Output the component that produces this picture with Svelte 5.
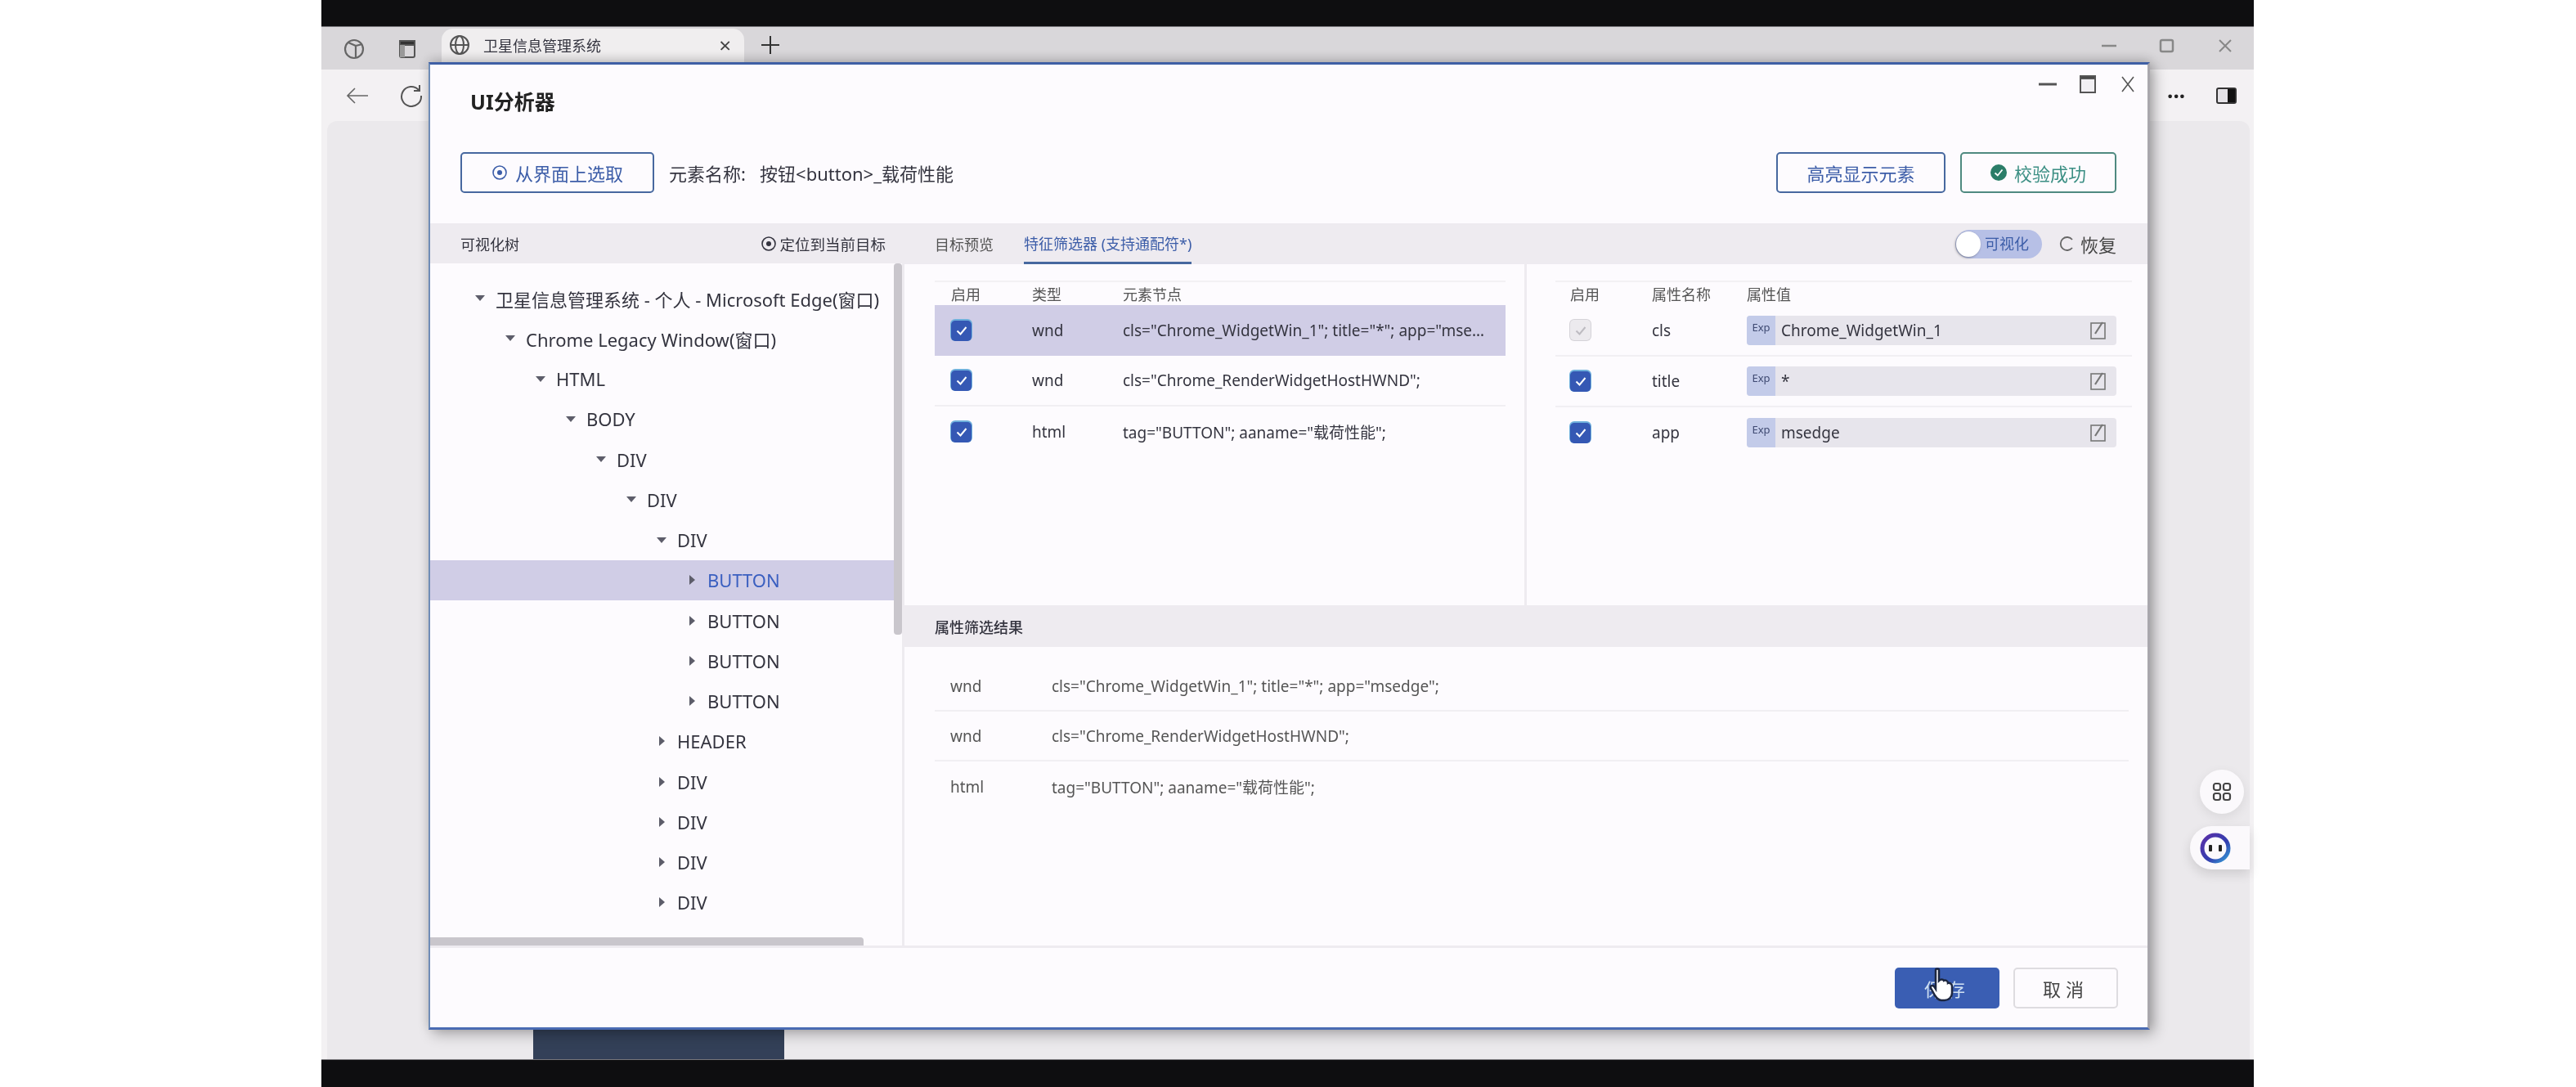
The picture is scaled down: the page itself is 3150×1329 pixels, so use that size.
<script>
  const tree = [
    { level: 0, label: "卫星信息管理系统 - 个人 - Microsoft Edge(窗口)", open: true },
    { level: 1, label: "Chrome Legacy Window(窗口)", open: true },
    { level: 2, label: "HTML", open: true },
    { level: 3, label: "BODY", open: true },
    { level: 4, label: "DIV", open: true },
    { level: 5, label: "DIV", open: true },
    { level: 6, label: "DIV", open: true },
    { level: 7, label: "BUTTON", selected: true },
    { level: 7, label: "BUTTON" },
    { level: 7, label: "BUTTON" },
    { level: 7, label: "BUTTON" },
    { level: 6, label: "HEADER" },
    { level: 6, label: "DIV" },
    { level: 6, label: "DIV" },
    { level: 6, label: "DIV" },
    { level: 6, label: "DIV" },
    { level: 6, label: "DIV" }
  ];

  const nodes = [
    { type: "wnd", text: 'cls="Chrome_WidgetWin_1"; title="*"; app="msedge";', selected: true },
    { type: "wnd", text: 'cls="Chrome_RenderWidgetHostHWND";' },
    { type: "html", text: 'tag="BUTTON"; aaname="载荷性能";' }
  ];

  const attrs = [
    { name: "cls", value: "Chrome_WidgetWin_1", disabled: true },
    { name: "title", value: "*" },
    { name: "app", value: "msedge" }
  ];
</script>

{#snippet target(size)}
  <svg width={size} height={size} viewBox="0 0 20 20" fill="none" stroke="currentColor" stroke-width="1.6">
    <circle cx="10" cy="10" r="8" />
    <circle cx="10" cy="10" r="3" fill="currentColor" stroke="none" />
  </svg>
{/snippet}

{#snippet checkbox(disabled)}
  <span class="check" class:disabled>
    <svg width="18" height="18" viewBox="0 0 18 18" fill="none" stroke="currentColor" stroke-width="2">
      <path d="M3.5 9.5 7.5 13.5 14.5 5" />
    </svg>
  </span>
{/snippet}

<div class="page">
  <div class="screen">
    <div class="letterbox"></div>

    <div class="tabstrip">
      <span class="tool">
        <svg width="26" height="28" viewBox="0 0 26 28" fill="none" stroke="#666" stroke-width="2.200">
          <circle cx="13" cy="14" r="11" />
          <path d="M6 6 15 10V24M15 10 23 8" />
        </svg>
      </span>
      <span class="tool gap">
        <svg width="22" height="24" viewBox="0 0 22 24" fill="none" stroke="#555" stroke-width="2">
          <rect x="2" y="2" width="18" height="20" rx="2" />
          <rect x="2" y="2" width="18" height="5" fill="#333" />
          <rect x="2" y="7" width="6" height="15" fill="#999" stroke="none" />
        </svg>
      </span>
      <div class="tab">
        <svg width="26" height="26" viewBox="0 0 26 26" fill="none" stroke="#555" stroke-width="2">
          <circle cx="13" cy="13" r="11" />
          <ellipse cx="13" cy="13" rx="5" ry="11" />
          <path d="M2 13H24" />
        </svg>
        <span class="tab-title">卫星信息管理系统</span>
        <span class="tab-close">×</span>
      </div>
      <span class="tool plus">
        <svg width="24" height="24" viewBox="0 0 24 24" stroke="#333" stroke-width="2">
          <path d="M12 1V23M1 12H23" />
        </svg>
      </span>
      <div class="win-controls">
        <svg class="tool" width="20" height="20" viewBox="0 0 20 20" stroke="#888" stroke-width="2.500"><path d="M1 10H19" /></svg>
        <svg class="tool" width="20" height="20" viewBox="0 0 20 20" fill="none" stroke="#888" stroke-width="2.500"><rect x="2" y="3" width="15" height="14" rx="2" /></svg>
        <svg class="tool" width="20" height="20" viewBox="0 0 20 20" stroke="#888" stroke-width="2"><path d="M3 3 17 17M17 3 3 17" /></svg>
      </div>
    </div>

    <div class="toolbar">
      <svg class="tool" width="28" height="28" viewBox="0 0 28 28" fill="none" stroke="#666" stroke-width="1.600">
        <path d="M27 14H2M11 5 2 14 11 23" />
      </svg>
      <svg class="tool reload" width="28" height="28" viewBox="0 0 28 28" fill="none" stroke="#555" stroke-width="2">
        <path d="M23 7A12 12 0 1 0 26 14" />
        <path d="M24 1V8H17" />
      </svg>
      <span class="dots">···</span>
      <span class="sidebar-icon"><i></i></span>
    </div>

    <div class="browser-page">
      <div class="card"></div>
      <div class="nav-block"></div>

      <button class="float-btn" aria-label="应用">
        <svg width="24" height="24" viewBox="0 0 24 24" fill="none" stroke="#444" stroke-width="2.2">
          <rect x="2" y="2" width="8" height="8" rx="2.5" />
          <rect x="14" y="2" width="8" height="8" rx="2.5" />
          <rect x="2" y="14" width="8" height="8" rx="2.5" />
          <rect x="14" y="14" width="8" height="8" rx="2.5" />
        </svg>
      </button>
      <button class="bot-btn" aria-label="助手">
        <svg width="38" height="38" viewBox="0 0 38 38" fill="none">
          <defs>
            <linearGradient id="ring" x1="0" y1="0" x2="1" y2="1">
              <stop offset="0" stop-color="#5b2fa8" />
              <stop offset="0.6" stop-color="#3340b0" />
              <stop offset="1" stop-color="#35a0d8" />
            </linearGradient>
          </defs>
          <circle cx="19" cy="19" r="16" stroke="url(#ring)" stroke-width="5" />
          <rect x="11" y="15" width="4" height="8" rx="1" fill="#222" />
          <rect x="23" y="15" width="4" height="8" rx="1" fill="#222" />
        </svg>
      </button>
    </div>

    <div class="letterbox bottom"></div>

    <div class="dialog">
      <header class="dialog-head">
        <h1>UI分析器</h1>
        <div class="dialog-controls">
          <span><svg width="22" height="4" viewBox="0 0 22 4"><rect width="22" height="3" y="0.5" fill="#555" /></svg></span>
          <span>
            <svg width="20" height="22" viewBox="0 0 20 22" fill="#f1eff3" stroke="#555" stroke-width="2">
              <rect x="1" y="1" width="18" height="20" />
              <rect x="1" y="1" width="18" height="3" fill="#444" />
            </svg>
          </span>
          <span><svg width="16" height="20" viewBox="0 0 16 20" stroke="#555" stroke-width="1.6"><path d="M1 1 15 19M15 1 1 19" /></svg></span>
        </div>
      </header>

      <div class="actions">
        <button class="btn primary-line pick">{@render target(20)}从界面上选取</button>
        <span class="element-name">元素名称:&nbsp;&nbsp; 按钮&lt;button&gt;_载荷性能</span>
        <span class="spacer"></span>
        <button class="btn primary-line highlight">高亮显示元素</button>
        <button class="btn success-line">
          <svg width="20" height="20" viewBox="0 0 20 20">
            <circle cx="10" cy="10" r="10" fill="#2b7d68" />
            <path d="M5.5 10.5 8.800 13.500 14.500 6.500" fill="none" stroke="#fff" stroke-width="1.800" />
          </svg>
          校验成功
        </button>
      </div>

      <div class="body">
        <aside class="tree-panel">
          <div class="tree-head">
            <span>可视化树</span>
            <span class="locate">{@render target(20)}定位到当前目标</span>
          </div>
          <div class="tree">
            {#each tree as row}
              <div class="tree-row" class:selected={row.selected} style={`padding-left:${54 + row.level * 37}px`}>
                <i class={row.open ? "arrow down" : "arrow right"}></i>
                <span>{row.label}</span>
              </div>
            {/each}
            <div class="scroll-v"></div>
            <div class="scroll-h"></div>
          </div>
        </aside>

        <main class="detail">
          <div class="tabs">
            <span class="tab-item">目标预览</span>
            <span class="tab-item active">特征筛选器 (支持通配符*)</span>
            <span class="spacer"></span>
            <span class="toggle"><i></i>可视化</span>
            <span class="restore">
              <svg width="20" height="20" viewBox="0 0 20 20" fill="none" stroke="#666" stroke-width="1.800">
                <path d="M16 5A8 8 0 1 0 16 15" />
              </svg>
              恢复
            </span>
          </div>

          <div class="filters">
            <section class="node-table">
              <div class="row heading node-grid">
                <span>启用</span><span>类型</span><span>元素节点</span>
              </div>
              {#each nodes as node}
                <div class="row node-grid" class:selected={node.selected}>
                  {@render checkbox(false)}
                  <span>{node.type}</span>
                  <span class="ellipsis">{node.text}</span>
                </div>
              {/each}
            </section>

            <section class="attr-table">
              <div class="row heading attr-grid">
                <span>启用</span><span>属性名称</span><span>属性值</span>
              </div>
              {#each attrs as attr}
                <div class="row attr-grid">
                  {@render checkbox(attr.disabled)}
                  <span>{attr.name}</span>
                  <div class="value">
                    <span class="exp">Exp</span>
                    <span class="value-text">{attr.value}</span>
                    <svg width="22" height="24" viewBox="0 0 22 24" fill="none" stroke="#777" stroke-width="1.600">
                      <rect x="2" y="3" width="17" height="19" />
                      <path d="M7 16 16 2" stroke-width="2.200" />
                    </svg>
                  </div>
                </div>
              {/each}
            </section>
          </div>

          <div class="result-head">属性筛选结果</div>
          <div class="results">
            {#each nodes as node}
              <div class="result-row">
                <span>{node.type}</span>
                <span>{node.text}</span>
              </div>
            {/each}
          </div>
        </main>
      </div>

      <footer class="dialog-foot">
        <button class="btn save">保存</button>
        <button class="btn cancel">取消</button>
      </footer>
    </div>

    <svg class="cursor" width="30" height="42" viewBox="0 0 30 42">
      <path
        d="M8 3C8 1 12 1 12 3V16C14 14 17 14 18 16C20 15 23 16 23 19C25 18 28 20 28 23V31C28 36 24 40 19 40H15C11 40 9 37 7 34L2 25C1 22 4 21 6 23L8 26Z"
        fill="#fff"
        stroke="#1d2740"
        stroke-width="2.500"
      />
    </svg>
  </div>
</div>

<style>
  :global(*), :global(*::before), :global(*::after) { box-sizing: border-box; }
  :global(body) {
    margin: 0;
    background: #fff;
    font-family: "Noto Sans", "Noto Sans CJK SC", sans-serif;
    color: #34343f;
  }

  /* the capture is a soft video frame, so everything sits slightly out of focus */
  .page { width: 3150px; height: 1329px; overflow: hidden; background: #fff; filter: blur(0.5px); }
  .screen {
    position: relative;
    display: flex;
    flex-direction: column;
    width: 2363px;
    height: 1329px;
    margin-left: 393px;
  }
  .letterbox { flex: 0 0 33px; background: #0e0e10; border-bottom: 1px solid #77767a; }
  .letterbox.bottom { flex-basis: 34px; border-bottom: 0; border-top: 1px solid #77767a; }
  .spacer { flex: 1; }

  /* Browser chrome behind the dialog */
  .tabstrip {
    flex: 0 0 52px;
    display: flex;
    align-items: center;
    padding: 2px 19px 0 24px;
    background: #d9d7da;
  }
  .tool { flex: 0 0 32px; display: flex; justify-content: center; }
  .gap { margin-left: 33px; }
  .tab {
    display: flex;
    align-items: center;
    align-self: stretch;
    width: 370px;
    margin-left: 26px;
    padding: 0 16px 10px 9px;
    gap: 16px;
    background: #f0eeef;
    border-radius: 14px 14px 0 0;
    font-size: 18px;
  }
  .tab-title { flex: 1; }
  .tab-close { font-size: 26px; line-height: 1; color: #444; }
  .plus { margin-left: 16px; padding-bottom: 10px; }
  .win-controls { margin-left: auto; display: flex; gap: 39px; padding-bottom: 8px; }
  .win-controls svg { width: 32px; }

  .toolbar {
    flex: 0 0 63px;
    display: flex;
    align-items: center;
    padding: 0 21px 0 28px;
    background: #f3f1f3;
  }
  .reload { margin-left: 34px; }
  .dots { margin-left: auto; margin-right: 38px; font-size: 26px; font-weight: 700; color: #222; line-height: 1; }
  .sidebar-icon {
    display: flex;
    justify-content: flex-end;
    width: 25px;
    height: 20px;
    border: 2px solid #333;
    border-radius: 3px;
    background: #e4e2e6;
  }
  .sidebar-icon i { width: 9px; background: #111; }

  .browser-page { position: relative; flex: 1; background: #f3f1f3; }
  .card {
    position: absolute;
    inset: 0 5px 0 7px;
    background: #ebe9ec;
    border-radius: 12px 12px 0 0;
  }
  .nav-block {
    position: absolute;
    left: 259px;
    bottom: 0;
    width: 307px;
    height: 40px;
    background: #334058;
  }
  .float-btn, .bot-btn {
    position: absolute;
    display: flex;
    align-items: center;
    justify-content: center;
    border: 0;
    padding: 0;
    background: #fbf9fc;
  }
  .float-btn {
    right: 12px;
    top: 793px;
    width: 54px;
    height: 54px;
    border-radius: 50%;
    box-shadow: 0 4px 14px rgba(0, 0, 0, 0.08);
  }
  .bot-btn {
    right: 5px;
    top: 862px;
    width: 73px;
    height: 53px;
    padding-right: 11px;
    border-radius: 27px 0 0 27px;
    box-shadow: 0 6px 14px rgba(0, 0, 0, 0.12);
  }

  /* Dialog */
  .dialog {
    position: absolute;
    left: 131px;
    top: 76px;
    width: 2105px;
    height: 1183px;
    display: flex;
    flex-direction: column;
    background: #fdfbfe;
    border: 2px solid #6f8cb6;
    border-right: 3px solid #a9a7ad;
    border-top: 3px solid #3f5fa5;
    border-bottom: 3px solid #4a6bb3;
    box-shadow: 5px 5px 16px rgba(0, 0, 0, 0.3), 0 -4px 12px rgba(0, 0, 0, 0.12);
  }
  .dialog-head { flex: 0 0 107px; display: flex; justify-content: space-between; padding-left: 49px; }
  h1 { margin: 30px 0 0; font-size: 25px; line-height: 30px; font-weight: 700; color: #222; }
  .dialog-controls { display: flex; height: 48px; }
  .dialog-controls span { width: 49px; display: flex; align-items: center; justify-content: center; }

  .actions { flex: 0 0 50px; display: flex; align-items: stretch; gap: 18px; padding: 0 38px 0 37px; }
  .btn {
    display: flex;
    align-items: center;
    justify-content: center;
    gap: 9px;
    padding: 0;
    font: inherit;
    font-size: 22px;
    background: #fdfbfe;
    border-radius: 5px;
  }
  .primary-line { border: 2px solid #47689f; color: #3c5da8; }
  .pick { width: 237px; }
  .highlight { width: 207px; }
  .success-line { width: 191px; border: 2px solid #4f8a80; color: #3c8f84; }
  .element-name { align-self: center; font-size: 22px; }

  .body { flex: 1; min-height: 0; margin-top: 37px; display: flex; border-bottom: 3px solid #eeebf0; }

  .tree-panel { flex: 0 0 580px; display: flex; flex-direction: column; border-right: 3px solid #eeebf0; }
  .tree-head {
    flex: 0 0 49px;
    display: flex;
    align-items: center;
    justify-content: space-between;
    padding: 0 20px 0 37px;
    background: #eeebf0;
    font-size: 18px;
  }
  .locate { display: flex; align-items: center; gap: 3px; font-size: 18.5px; }
  .tree { position: relative; flex: 1; overflow: hidden; padding-top: 18px; }
  .tree-row { display: flex; align-items: center; height: 49.25px; font-size: 22px; white-space: nowrap; }
  .tree-row.selected { background: #d0cde6; margin-right: 10px; color: #3a5fc0; }
  .arrow { flex: 0 0 14px; margin-right: 12px; display: flex; justify-content: center; }
  .arrow::before { content: ""; border-style: solid; border-color: transparent; }
  .arrow.down::before { border-width: 7px 6px 0; border-top-color: #5d5d6a; }
  .arrow.right::before { border-width: 6px 0 6px 7px; border-left-color: #5d5d6a; }
  .scroll-v {
    position: absolute;
    top: 0;
    right: 0;
    width: 10px;
    height: 454px;
    background: #c9c6cc;
    border-radius: 4px;
  }
  .scroll-h {
    position: absolute;
    left: 0;
    bottom: -3px;
    width: 530px;
    height: 13px;
    background: #c9c6cc;
    border-radius: 0 4px 4px 0;
  }

  .detail { flex: 1; min-width: 0; display: flex; flex-direction: column; }
  .tabs {
    flex: 0 0 50px;
    display: flex;
    align-items: stretch;
    padding: 0 38px 0 37px;
    background: #eeebf0;
    font-size: 18px;
  }
  .tab-item { display: flex; align-items: center; color: #555; margin-right: 37px; }
  .tab-item.active { color: #3c5da8; border-bottom: 3px solid #47689f; }
  .toggle {
    position: relative;
    align-self: center;
    width: 106px;
    height: 35px;
    padding-left: 36px;
    border-radius: 18px;
    background: #b7c0e6;
    color: #3c5da8;
    line-height: 35px;
  }
  .toggle i {
    position: absolute;
    left: 1px;
    top: 2px;
    width: 30px;
    height: 31px;
    border-radius: 50%;
    background: #fff;
    box-shadow: -1px 1px 3px rgba(0, 0, 0, 0.35);
  }
  .restore {
    display: flex;
    align-items: center;
    gap: 6px;
    margin-left: 21px;
    font-size: 22px;
    color: #444;
  }

  .filters { flex: 0 0 417px; display: flex; }
  .node-table { flex: 0 0 761px; padding: 20px 23px 0 37px; border-right: 3px solid #eeebf0; }
  .attr-table { flex: 1; padding: 20px 19px 0 35px; }
  .row { display: grid; align-items: center; height: 62px; font-size: 19px; border-bottom: 2px solid #f1eff3; }
  .row:last-child { border-bottom: 0; }
  .row.heading { height: 30px; font-size: 18px; color: #555; border-top: 2px solid #f3f1f4; border-bottom: 0; }
  .node-grid { grid-template-columns: 99px 111px minmax(0, 1fr); padding: 0 18px 0 20px; }
  .attr-grid { grid-template-columns: 100px 116px minmax(0, 1fr); padding: 0 19px 0 18px; }
  .row.selected { background: #d0cde6; border-bottom: 0; }
  .attr-table .heading + .row { height: 63px; }
  .ellipsis { overflow: hidden; white-space: nowrap; text-overflow: ellipsis; }

  .check {
    display: flex;
    align-items: center;
    justify-content: center;
    width: 25px;
    height: 25px;
    border-radius: 5px;
    background: #3558b4;
    color: #fff;
    box-shadow: 0 -1px 0 1px #6fb0dc;
  }
  .check.disabled { background: #eceaee; color: #bdbbc1; box-shadow: 0 0 0 1px #d5d3d8; }

  .value {
    display: flex;
    align-items: center;
    height: 36px;
    padding-right: 11px;
    background: #e7e5ec;
    border-radius: 4px;
    overflow: hidden;
  }
  .exp {
    align-self: stretch;
    flex: 0 0 35px;
    padding-top: 5px;
    background: #c3cbe9;
    font-size: 13px;
    text-align: center;
    color: #3f4a72;
  }
  .value-text { flex: 1; padding-left: 7px; }

  .result-head {
    flex: 0 0 51px;
    display: flex;
    align-items: center;
    padding-left: 37px;
    background: #eeebf0;
    font-size: 18px;
    font-weight: 500;
  }
  .results { flex: 1; padding: 18px 23px 0 37px; }
  .result-row {
    display: grid;
    grid-template-columns: 124px 1fr;
    align-items: center;
    height: 61px;
    padding-left: 19px;
    font-size: 19px;
    color: #555;
    border-bottom: 2px solid #f1eff3;
  }
  .result-row:last-child { border-bottom: 0; }

  .dialog-foot { flex: 0 0 97px; display: flex; align-items: center; justify-content: flex-end; gap: 17px; padding-right: 36px; }
  .save, .cancel { width: 128px; height: 50px; letter-spacing: 6px; }
  .save { background: #3a5eb3; border: 0; color: #cfe0f2; }
  .cancel { border: 2px solid #dedce0; color: #444; }

  .cursor { position: absolute; left: 1966px; top: 1183px; }
</style>
